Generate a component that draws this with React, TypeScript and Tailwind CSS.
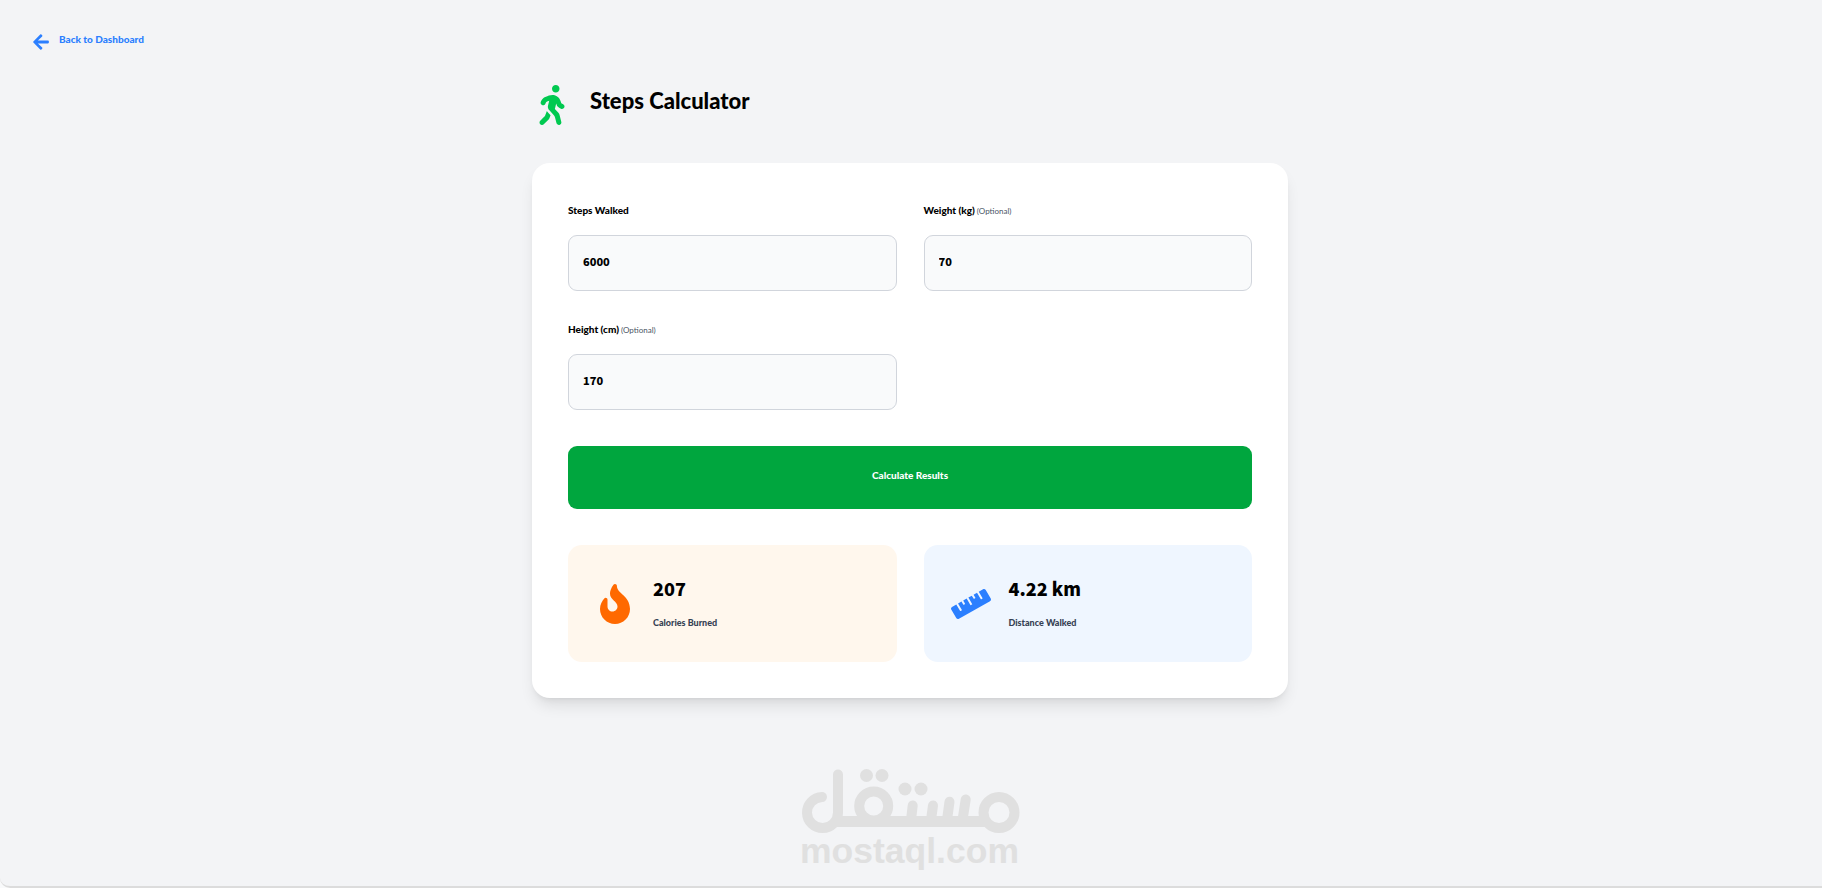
import { useState } from "react";
import type { FormEvent, ReactNode } from "react";
import { FaArrowLeft, FaFire, FaRuler, FaWalking } from "react-icons/fa";

const labelFont = "font-['Lato',sans-serif] font-black";
const numberFont = "font-['Noto_Sans_CJK_SC','Noto_Sans',sans-serif] font-black";

type FieldProps = {
  id: string;
  label: string;
  optional?: boolean;
  value: string;
  onChange: (value: string) => void;
};

function Field({ id, label, optional, value, onChange }: FieldProps) {
  return (
    <div className="flex flex-col gap-[9px]">
      <label htmlFor={id} className={`${labelFont} h-[27px] text-[10px] leading-[22px] text-black`}>
        {label}
        {optional && <span className="text-[8px] leading-none font-normal text-gray-600"> (Optional)</span>}
      </label>
      <input
        id={id}
        type="text"
        inputMode="numeric"
        value={value}
        onChange={(e) => onChange(e.target.value)}
        className={`${numberFont} h-14 w-full rounded-[9px] border border-gray-300 bg-gray-50 px-[14px] pb-[5px] text-[11px] text-black outline-none focus:border-green-500`}
      />
    </div>
  );
}

type ResultProps = { icon: ReactNode; value: string; label: string; tone: string };

function Result({ icon, value, label, tone }: ResultProps) {
  return (
    <div className={`flex items-center gap-[18px] rounded-[14px] p-[27px] ${tone}`}>
      {icon}
      <div>
        <p className={`${numberFont} pb-1 text-[18px] leading-8 text-black`}>{value}</p>
        <p className={`${labelFont} pt-[3px] text-[9px] leading-6 text-gray-700`}>{label}</p>
      </div>
    </div>
  );
}

function Watermark() {
  return (
    <svg viewBox="0 0 220 106" className="h-[106px] w-[220px] overflow-visible" role="img" aria-label="mostaql.com">
      <g fill="none" stroke="#e0e0e0" strokeWidth="10" strokeLinecap="round">
        <path d="M22 29A15.500 15.500 0 1 0 38 44.500V6.500" />
        <path d="M35 53.500H187" strokeWidth="11" strokeLinecap="butt" />
        <circle cx="73.700" cy="38" r="14.500" />
        <circle cx="199" cy="44.500" r="15.500" />
        <path d="M112.700 37.500L111 52M133 37.500L131 52M149.500 33.700L147 52M165.700 31.500L162.500 52" />
      </g>
      <g fill="#e0e0e0">
        <circle cx="66.500" cy="7.500" r="6.500" />
        <circle cx="82" cy="7.500" r="6.500" />
        <circle cx="105" cy="21" r="6.500" />
        <circle cx="121" cy="21" r="6.500" />
        <text x="0" y="95" fontSize="35.500" fontWeight="700" fontFamily="Liberation Sans, sans-serif">
          mostaql.com
        </text>
      </g>
    </svg>
  );
}

export default function App() {
  const [steps, setSteps] = useState("6000");
  const [weight, setWeight] = useState("70");
  const [height, setHeight] = useState("170");
  const [result, setResult] = useState({ calories: "207", distance: "4.22" });

  const calculate = (e: FormEvent) => {
    e.preventDefault();
    const km = (Number(steps) * Number(height || 170) * 0.414) / 100000;
    const kcal = km * Number(weight || 70) * 0.7;
    setResult({ calories: kcal.toFixed(0), distance: km.toFixed(2) });
  };

  return (
    <div className="min-h-screen bg-gray-50">
      <div className="flex min-h-screen flex-col rounded-bl-[10px] border-b-2 border-[#dcdcdc] bg-gray-100 pt-7 pr-[34px] pb-2 pl-8">
        <nav className="flex">
          <a href="#dashboard" className="flex items-center gap-[9px] text-[#2b7fff]">
            <FaArrowLeft className="size-[18px]" />
            <span className={`${labelFont} pb-[5px] text-[10px] leading-[22px]`}>Back to Dashboard</span>
          </a>
        </nav>

        <main className="mx-auto mt-[27px] w-full max-w-[756px]">
          <header className="mb-9 flex h-[45px] items-center gap-[18px]">
            <FaWalking className="size-10 text-[#00c950]" />
            <h1 className={`${labelFont} pb-[7px] text-[22px] leading-9 text-black`}>Steps Calculator</h1>
          </header>

          <section className="rounded-[18px] bg-white p-9 shadow-lg">
            <form onSubmit={calculate}>
              <div className="grid grid-cols-2 gap-[27px]">
                <Field id="steps" label="Steps Walked" value={steps} onChange={setSteps} />
                <Field id="weight" label="Weight (kg)" optional value={weight} onChange={setWeight} />
                <Field id="height" label="Height (cm)" optional value={height} onChange={setHeight} />
              </div>
              <button
                type="submit"
                className={`${labelFont} mt-9 h-[63px] w-full cursor-pointer rounded-[9px] bg-[#00a63e] pb-[5px] text-[10px] text-white`}
              >
                Calculate Results
              </button>
            </form>

            <div className="mt-9 grid grid-cols-2 gap-[27px]">
              <Result
                icon={<FaFire className="size-10 text-[#ff6900]" />}
                value={result.calories}
                label="Calories Burned"
                tone="bg-orange-50"
              />
              <Result
                icon={<FaRuler className="size-10 text-[#2b7fff]" />}
                value={`${result.distance} km`}
                label="Distance Walked"
                tone="bg-blue-50"
              />
            </div>
          </section>
        </main>

        <footer className="mt-[70px] flex justify-center">
          <Watermark />
        </footer>
      </div>
    </div>
  );
}
